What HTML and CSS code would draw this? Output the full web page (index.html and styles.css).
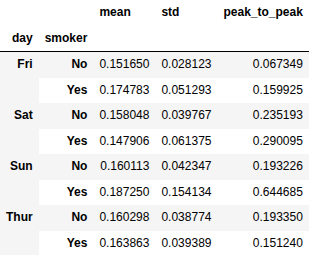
FILE: index.html
```html
<!DOCTYPE html>
<html>
<head>
<meta charset="utf-8">
<link rel="stylesheet" href="styles.css">
</head>
<body>
<table class="df">
  <thead>
    <tr class="col-head">
      <th></th>
      <th></th>
      <th>mean</th>
      <th>std</th>
      <th>peak_to_peak</th>
    </tr>
    <tr class="idx-head">
      <th>day</th>
      <th>smoker</th>
      <th></th>
      <th></th>
      <th></th>
    </tr>
  </thead>
  <tbody>
    <tr><th rowspan="2" class="top">Fri</th><th>No</th><td>0.151650</td><td>0.028123</td><td>0.067349</td></tr>
    <tr><th>Yes</th><td>0.174783</td><td>0.051293</td><td>0.159925</td></tr>
    <tr><th rowspan="2" class="top">Sat</th><th>No</th><td>0.158048</td><td>0.039767</td><td>0.235193</td></tr>
    <tr><th>Yes</th><td>0.147906</td><td>0.061375</td><td>0.290095</td></tr>
    <tr><th rowspan="2" class="top">Sun</th><th>No</th><td>0.160113</td><td>0.042347</td><td>0.193226</td></tr>
    <tr><th>Yes</th><td>0.187250</td><td>0.154134</td><td>0.644685</td></tr>
    <tr><th rowspan="2" class="top">Thur</th><th>No</th><td>0.160298</td><td>0.038774</td><td>0.193350</td></tr>
    <tr><th>Yes</th><td>0.163863</td><td>0.039389</td><td>0.151240</td></tr>
  </tbody>
</table>
</body>
</html>
```
FILE: styles.css
```css
html, body {
  margin: 0;
  padding: 0;
  background: #ffffff;
}

.df {
  border-collapse: collapse;
  border-spacing: 0;
  border: none;
  color: #000000;
  font-family: "Liberation Sans", Arial, sans-serif;
  font-size: 12px;
}

.df th,
.df td {
  text-align: right;
  vertical-align: middle;
  padding: 6px 6px;
  line-height: 13.5px;
  white-space: nowrap;
  border: none;
}

.df th {
  font-weight: bold;
}

.df td {
  font-weight: normal;
}

.df thead {
  border-bottom: 1px solid #000000;
  vertical-align: bottom;
}

.df .col-head th {
  text-align: left;
}

.df tbody tr:nth-child(odd) {
  background: #f5f5f5;
}

.df .top {
  vertical-align: top;
}
```
